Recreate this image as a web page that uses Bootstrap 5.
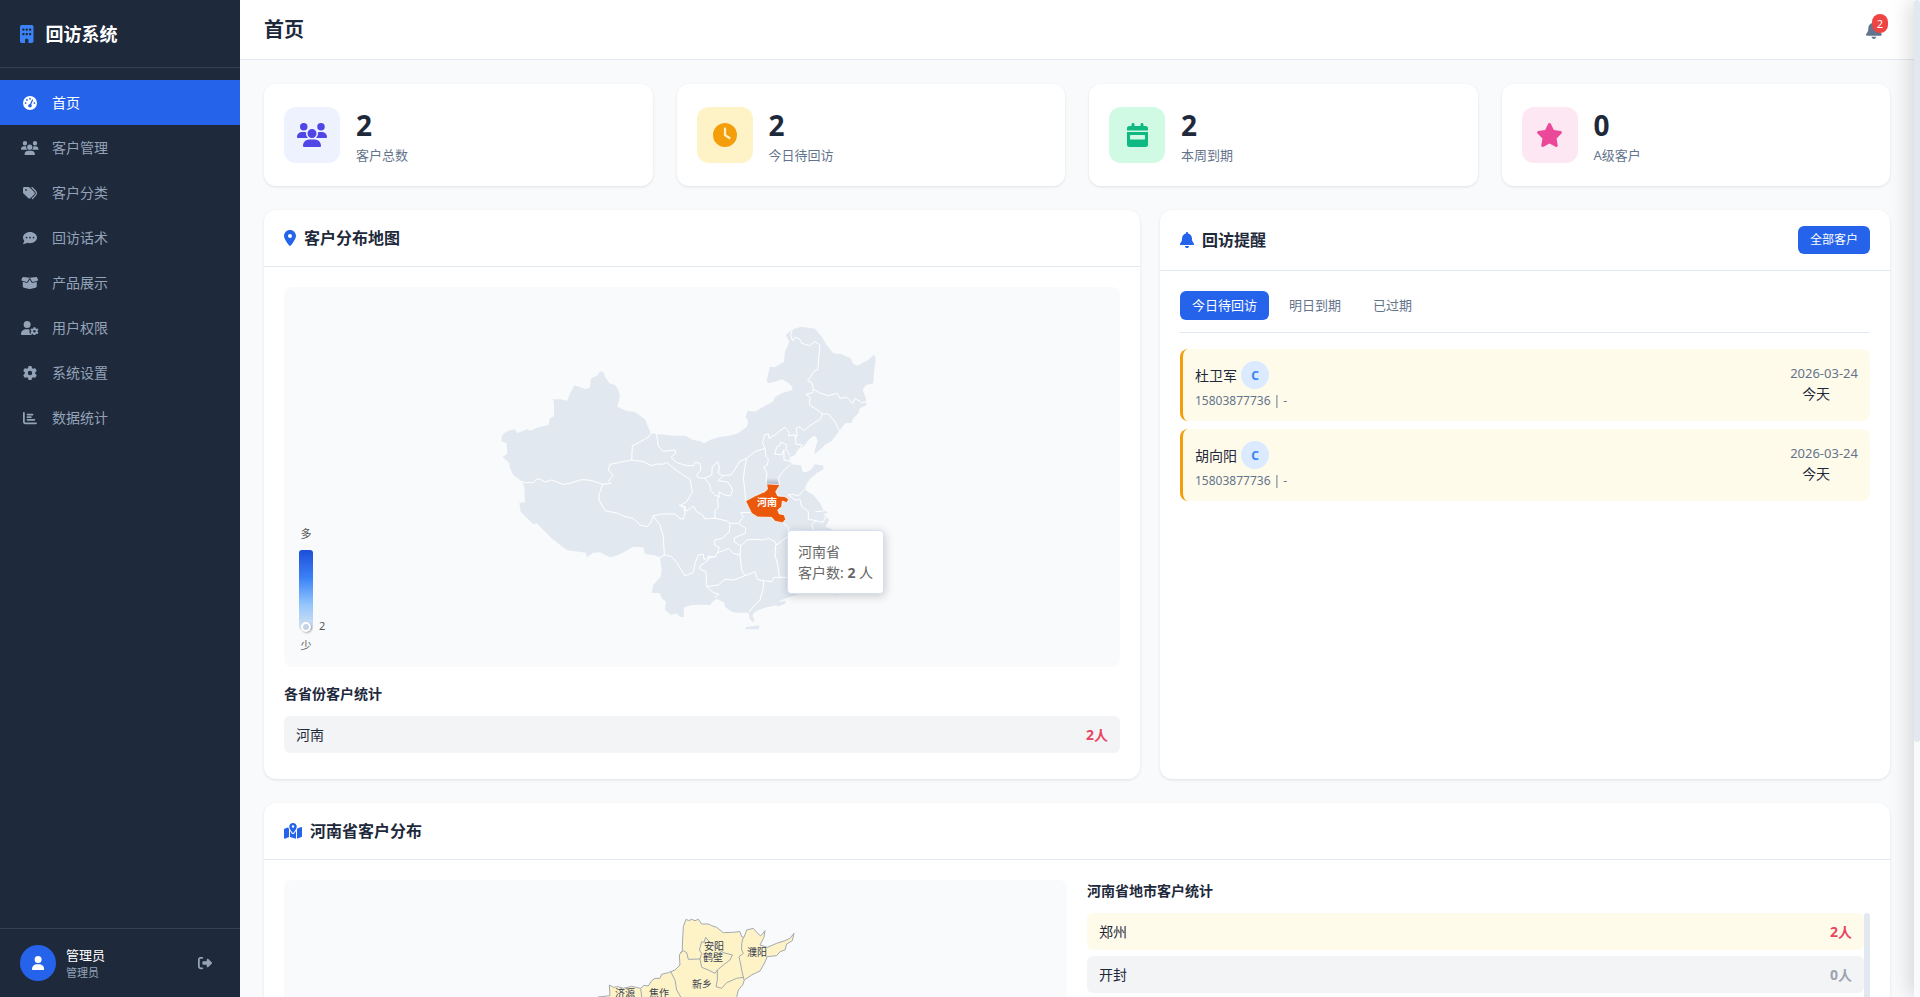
<!DOCTYPE html>
<html lang="zh-CN">
<head>
<meta charset="utf-8">
<meta name="viewport" content="width=device-width, initial-scale=1">
<title>首页 - 回访系统</title>
<link href="https://cdn.jsdelivr.net/npm/bootstrap@5.3.0/dist/css/bootstrap.min.css" rel="stylesheet">
<style>
  :root { --ink:#1e293b; --muted:#64748b; --line:#e2e8f0; --brand:#2563eb; --page:#f8fafc; }
  body { font-family:"Noto Sans","Noto Sans CJK SC",sans-serif; font-size:14px; line-height:21px; color:var(--ink); background:var(--page); }
  .ic { height:1em; width:auto; fill:currentColor; display:block; flex:none; }

  /* sidebar */
  .sidebar { width:240px; background:var(--ink); }
  .brand { height:68px; padding:0 20px; gap:12px; font-size:18px; line-height:24px; border-bottom:1px solid #334155; }
  .brand .ic { color:#3b82f6; }
  .side-nav { padding:12px 0; }
  .side-nav a { color:#94a3b8; padding:12px 20px; gap:12px; text-decoration:none; }
  .side-nav a.active { color:#fff; background:var(--brand); }
  .side-nav .slot { width:20px; }
  .side-user { padding:16px 20px; gap:10px; border-top:1px solid #334155; }
  .avatar { width:36px; height:36px; background:var(--brand); font-size:14px; color:#fff; }
  .u-name { font-size:13px; line-height:20px; color:#fff; }
  .u-role { font-size:11px; line-height:16px; color:#94a3b8; }
  .logout { color:#94a3b8; margin-right:8px; font-size:14px; }

  /* main */
  .main { overflow-y:auto; scrollbar-width:none; }
  .main::-webkit-scrollbar { display:none; }
  .topbar { height:60px; padding:0 24px; border-bottom:1px solid var(--line); background:#fff; }
  .topbar h1 { font-size:20px; line-height:24px; }
  .bell { padding:0 8px; font-size:18px; color:var(--muted); }
  .bell-count { top:-7px; right:2px; width:16px; height:19px; border-radius:10px; background:#ef4444; font-size:11px; line-height:19px; }
  .content { padding:24px; }
  .panel { background:#fff; border-radius:12px; box-shadow:0 1px 3px rgba(0,0,0,.1); }
  .stat { padding:20px; gap:16px; }
  .stat-icon { width:56px; height:56px; border-radius:12px; font-size:24px; }
  .stat-num { font-size:28px; line-height:42px; }
  .stat-label { font-size:13px; line-height:18px; padding-bottom:2px; color:var(--muted); }
  .tone-indigo { background:#eef2ff; color:#4f46e5; }
  .tone-amber { background:#fef3c7; color:#f59e0b; }
  .tone-green { background:#d1fae5; color:#10b981; }
  .tone-pink { background:#fce7f3; color:#ec4899; }

  .split-map { display:grid; grid-template-columns:1.2fr 1fr; gap:20px; }
  .split-city { display:grid; grid-template-columns:1fr 1fr; gap:20px; }
  .panel-head { padding:16px 20px; border-bottom:1px solid var(--line); }
  .panel-head h2 { font-size:16px; line-height:24px; gap:8px; }
  .panel-head .ic { color:var(--brand); }
  .panel-body { padding:20px; }
  .map-box { background:var(--page); border-radius:8px; }
  .map-box > svg { display:block; width:100%; height:380px; }
  .sub-title { font-size:14px; line-height:21px; margin-bottom:12px; }
  .count-row { background:#f3f4f6; border-radius:6px; padding:8px 12px; margin-bottom:6px; }
  .count-row.hot { background:#fffbeb; }
  .count-row b { color:#9ca3af; }
  .count-row .some { color:#e94560; }

  .visual-map { left:12px; bottom:13px; width:20px; font-size:11px; line-height:16px; color:#555; }
  .ramp { width:14px; height:80px; border-radius:3px; background:linear-gradient(#1d4ed8,#3b82f6 35%,#93c5fd 68%,#dbe4ee); }
  .ramp i { left:2px; bottom:-2px; width:10px; height:10px; border:2px solid #fff; border-radius:50%; background:#c4d2e5; box-shadow:1px 1px 2px rgba(0,0,0,.3); }
  .ramp span { left:20px; bottom:-4px; }
  .map-tip { left:calc(50% + 85px); top:243px; padding:10px; background:#fff; border:1px solid #d5e1f2; border-radius:4px; color:#666; box-shadow:1px 2px 10px rgba(0,0,0,.2); }

  .btn-brand { background:var(--brand); color:#fff; border:0; border-radius:6px; font-size:12px; line-height:18px; padding:5px 12px; }
  .tabs { gap:8px; padding-bottom:12px; border-bottom:1px solid var(--line); margin-bottom:16px; }
  .tabs button { border:0; background:none; color:var(--muted); border-radius:6px; font-size:13px; line-height:19px; padding:5px 12px; }
  .tabs button.active { background:var(--brand); color:#fff; }
  .remind { border-left:3px solid #f59e0b; background:#fffbeb; border-radius:8px; padding:12px 12px 8px; margin-bottom:8px; }
  .grade { width:28px; height:28px; background:#dbeafe; color:#3b82f6; font-size:12px; }
  .minor { font-size:12px; line-height:24px; color:var(--muted); }
  .date { font-size:13px; }
  .day { padding-left:12px; line-height:18px; }

  .city-list { max-height:346px; overflow:hidden; }
  .thumb { width:6px; background:var(--line); border-radius:3px; }
  .rail { width:6px; z-index:2; }
  .rail .thumb { height:74.4%; }
  .rail::before { content:""; position:absolute; z-index:-1; inset:0 auto 0 0; width:400px; background:var(--page); box-shadow:-4px 0 20px rgba(0,0,0,.15); }
</style>
</head>
<body>
<svg width="0" height="0" class="position-absolute" aria-hidden="true">
  <defs>
    <path id="i-building" d="M48 0C21.5 0 0 21.5 0 48V464c0 26.5 21.5 48 48 48h96V432c0-26.5 21.5-48 48-48s48 21.5 48 48v80h96c26.5 0 48-21.5 48-48V48c0-26.5-21.5-48-48-48H48zM64 240c0-8.8 7.2-16 16-16h32c8.8 0 16 7.2 16 16v32c0 8.8-7.2 16-16 16H80c-8.8 0-16-7.2-16-16V240zm112-16h32c8.8 0 16 7.2 16 16v32c0 8.8-7.2 16-16 16H176c-8.8 0-16-7.2-16-16V240c0-8.8 7.2-16 16-16zm80 16c0-8.8 7.2-16 16-16h32c8.8 0 16 7.2 16 16v32c0 8.8-7.2 16-16 16H272c-8.8 0-16-7.2-16-16V240zM80 96h32c8.8 0 16 7.2 16 16v32c0 8.8-7.2 16-16 16H80c-8.8 0-16-7.2-16-16V112c0-8.8 7.2-16 16-16zm80 16c0-8.8 7.2-16 16-16h32c8.8 0 16 7.2 16 16v32c0 8.8-7.2 16-16 16H176c-8.8 0-16-7.2-16-16V112zM272 96h32c8.8 0 16 7.2 16 16v32c0 8.8-7.2 16-16 16H272c-8.8 0-16-7.2-16-16V112c0-8.8 7.2-16 16-16z"/>
    <path id="i-gauge" d="M0 256a256 256 0 1 1 512 0A256 256 0 1 1 0 256zM288 96a32 32 0 1 0 -64 0 32 32 0 1 0 64 0zM256 416c35.3 0 64-28.7 64-64c0-17.4-6.9-33.1-18.1-44.6L366 161.7c5.3-12.1-.2-26.3-12.3-31.6s-26.3 .2-31.6 12.3L257.9 288c-.6 0-1.3 0-1.9 0c-35.3 0-64 28.7-64 64s28.7 64 64 64zM176 144a32 32 0 1 0 -64 0 32 32 0 1 0 64 0zM96 288a32 32 0 1 0 0-64 32 32 0 1 0 0 64zm352-32a32 32 0 1 0 -64 0 32 32 0 1 0 64 0z"/>
    <path id="i-users" d="M144 0a80 80 0 1 1 0 160A80 80 0 1 1 144 0zM512 0a80 80 0 1 1 0 160A80 80 0 1 1 512 0zM0 298.7C0 239.8 47.8 192 106.7 192h42.7c15.9 0 31 3.5 44.6 9.7c-1.3 7.2-1.9 14.7-1.9 22.3c0 38.2 16.8 72.5 43.3 96c-.2 0-.4 0-.7 0H21.3C9.6 320 0 310.4 0 298.7zM405.3 320c-.2 0-.4 0-.7 0c26.6-23.5 43.3-57.8 43.3-96c0-7.6-.7-15-1.9-22.3c13.6-6.3 28.7-9.7 44.6-9.7h42.7C592.2 192 640 239.8 640 298.7c0 11.8-9.6 21.3-21.3 21.3H405.3zM224 224a96 96 0 1 1 192 0 96 96 0 1 1 -192 0zM128 485.3C128 411.7 187.7 352 261.3 352H378.7C452.3 352 512 411.7 512 485.3c0 14.7-11.9 26.7-26.7 26.7H154.7c-14.7 0-26.7-11.9-26.7-26.7z"/>
    <path id="i-tags" d="M345 39.1L472.8 168.4c52.4 53 52.4 138.2 0 191.2L360.8 472.9c-9.3 9.4-24.5 9.5-33.9 .2s-9.5-24.5-.2-33.9L438.6 325.9c33.9-34.3 33.9-89.4 0-123.7L310.9 72.9c-9.3-9.4-9.2-24.6 .2-33.9s24.6-9.2 33.9 .2zM0 229.5V80C0 53.5 21.5 32 48 32H197.5c17 0 33.3 6.7 45.3 18.7l168 168c25 25 25 65.5 0 90.5L277.3 442.7c-25 25-65.5 25-90.5 0l-168-168C6.7 262.7 0 246.5 0 229.5zM144 144a32 32 0 1 0 -64 0 32 32 0 1 0 64 0z"/>
    <path id="i-comment" d="M256 448c141.4 0 256-93.1 256-208S397.4 32 256 32S0 125.1 0 240c0 45.1 17.7 86.8 47.7 120.9c-1.9 24.5-11.4 46.3-21.4 62.9c-5.5 9.2-11.1 16.6-15.2 21.6c-2.1 2.5-3.7 4.4-4.9 5.7l-1.6 1.7c-4.6 4.6-5.9 11.4-3.4 17.4c2.5 6 8.3 9.9 14.8 9.9c28.7 0 57.6-8.9 81.6-19.3c22.9-10 42.4-21.9 54.3-30.6c31.8 11.5 67 17.9 104.1 17.9zM128 208a32 32 0 1 1 0 64 32 32 0 1 1 0-64zm128 0a32 32 0 1 1 0 64 32 32 0 1 1 0-64zm96 32a32 32 0 1 1 64 0 32 32 0 1 1 -64 0z"/>
    <path id="i-box" d="M58.9 42.1c3-6.1 9.6-9.6 16.3-8.7L320 64 564.8 33.4c6.7-.8 13.3 2.7 16.3 8.7l41.7 83.4c9 17.9-.6 39.6-19.8 45.1L439.6 217.3c-13.9 4-28.8-1.9-36.2-14.3L320 64 236.6 203c-7.4 12.4-22.3 18.3-36.2 14.3L37.1 170.6c-19.3-5.5-28.8-27.2-19.8-45.1L58.9 42.1zM321.1 128l54.9 91.4c14.9 24.8 44.6 36.6 72.5 28.6L576 211.6v167c0 22-15 41.2-36.4 46.6l-204.1 51c-10.2 2.6-20.9 2.6-31 0l-204.1-51C79 419.7 64 400.5 64 378.5v-167L191.6 248c27.8 8 57.6-3.8 72.5-28.6L318.9 128h2.2z"/>
    <path id="i-gear" d="M495.9 166.6c3.2 8.7 .5 18.4-6.4 24.6l-43.3 39.4c1.1 8.3 1.7 16.8 1.7 25.4s-.6 17.1-1.7 25.4l43.3 39.4c6.9 6.2 9.6 15.9 6.4 24.6c-4.4 11.9-9.7 23.3-15.8 34.3l-4.7 8.1c-6.6 11-14 21.4-22.1 31.2c-5.9 7.2-15.7 9.6-24.5 6.8l-55.7-17.7c-13.4 10.3-28.2 18.9-44 25.4l-12.5 57.1c-2 9.1-9 16.3-18.2 17.8c-13.8 2.3-28 3.5-42.5 3.5s-28.7-1.2-42.5-3.5c-9.2-1.5-16.2-8.7-18.2-17.8l-12.5-57.1c-15.8-6.5-30.6-15.1-44-25.4L83.1 425.9c-8.8 2.8-18.6 .3-24.5-6.8c-8.1-9.8-15.5-20.2-22.1-31.2l-4.7-8.1c-6.1-11-11.4-22.4-15.8-34.3c-3.2-8.7-.5-18.4 6.4-24.6l43.3-39.4C64.6 273.1 64 264.6 64 256s.6-17.1 1.7-25.4L22.4 191.2c-6.9-6.2-9.6-15.9-6.4-24.6c4.4-11.9 9.7-23.3 15.8-34.3l4.7-8.1c6.6-11 14-21.4 22.1-31.2c5.9-7.2 15.7-9.6 24.5-6.8l55.7 17.7c13.4-10.3 28.2-18.9 44-25.4l12.5-57.1c2-9.1 9-16.3 18.2-17.8C227.3 1.2 241.5 0 256 0s28.7 1.2 42.5 3.5c9.2 1.5 16.2 8.7 18.2 17.8l12.5 57.1c15.8 6.5 30.6 15.1 44 25.4l55.7-17.7c8.8-2.8 18.6-.3 24.5 6.8c8.1 9.8 15.5 20.2 22.1 31.2l4.7 8.1c6.1 11 11.4 22.4 15.8 34.3zM256 336a80 80 0 1 0 0-160 80 80 0 1 0 0 160z"/>
    <g id="i-usergear"><path d="M224 0a128 128 0 1 1 0 256A128 128 0 1 1 224 0zM178.3 304h91.4c11.8 0 23.4 1.2 34.5 3.3c-2.1 18.5 7.4 35.6 21.8 44.8c-16.6 10.6-26.7 31.6-20 53.3c4 12.9 9.4 25.5 16.4 37.6s15.2 23.1 24.4 33c15.7 16.9 39.6 18.4 57.2 8.7v.9c0 9.2 2.7 18.5 7.9 26.3H29.7C13.3 512 0 498.7 0 482.3C0 383.8 79.8 304 178.3 304z"/><use href="#i-gear" transform="translate(340 224) scale(.59)"/></g>
    <path id="i-chart" d="M32 32c17.7 0 32 14.3 32 32V400c0 8.8 7.2 16 16 16H480c17.7 0 32 14.3 32 32s-14.3 32-32 32H80c-44.2 0-80-35.8-80-80V64C0 46.3 14.3 32 32 32zm96 96c0-17.7 14.3-32 32-32l192 0c17.7 0 32 14.3 32 32s-14.3 32-32 32l-192 0c-17.7 0-32-14.3-32-32zm32 64H288c17.7 0 32 14.3 32 32s-14.3 32-32 32H160c-17.7 0-32-14.3-32-32s14.3-32 32-32zm0 96H416c17.7 0 32 14.3 32 32s-14.3 32-32 32H160c-17.7 0-32-14.3-32-32s14.3-32 32-32z"/>
    <path id="i-pin" d="M215.7 499.2C267 435 384 279.4 384 192C384 86 298 0 192 0S0 86 0 192c0 87.4 117 243 168.3 307.2c12.3 15.3 35.1 15.3 47.4 0zM192 128a64 64 0 1 1 0 128 64 64 0 1 1 0-128z"/>
    <path id="i-bell" d="M224 0c-17.7 0-32 14.3-32 32V51.2C119 66 64 130.6 64 208v18.8c0 47-17.3 92.4-48.5 127.6l-7.4 8.3c-8.4 9.4-10.4 22.9-5.3 34.4S19.4 416 32 416H416c12.6 0 24-7.4 29.2-18.9s3.1-25-5.3-34.4l-7.4-8.3C401.3 319.2 384 273.9 384 226.8V208c0-77.4-55-142-128-156.8V32c0-17.7-14.3-32-32-32zm45.3 493.3c12-12 18.7-28.3 18.7-45.3H224 160c0 17 6.7 33.3 18.7 45.3s28.3 18.7 45.3 18.7s33.3-6.7 45.3-18.7z"/>
    <path id="i-clock" d="M256 0a256 256 0 1 1 0 512A256 256 0 1 1 256 0zM232 120V256c0 8 4 15.5 10.7 20l96 64c11 7.4 25.9 4.4 33.3-6.7s4.4-25.9-6.7-33.3L280 243.2V120c0-13.3-10.7-24-24-24s-24 10.7-24 24z"/>
    <path id="i-week" d="M128 0c17.7 0 32 14.3 32 32V64H288V32c0-17.7 14.3-32 32-32s32 14.3 32 32V64h48c26.5 0 48 21.5 48 48v48H0V112C0 85.5 21.5 64 48 64H96V32c0-17.7 14.3-32 32-32zM0 192H448V464c0 26.5-21.5 48-48 48H48c-26.5 0-48-21.5-48-48V192zm80 64c-8.8 0-16 7.2-16 16v64c0 8.8 7.2 16 16 16H368c8.8 0 16-7.2 16-16V272c0-8.8-7.2-16-16-16H80z"/>
    <path id="i-star" d="M316.9 18C311.6 7 300.4 0 288.1 0s-23.4 7-28.8 18L195 150.3 51.4 171.5c-12 1.8-22 10.2-25.7 21.7s-.7 24.2 7.9 32.7L137.8 329 113.2 474.7c-2 12 3 24.2 12.9 31.3s23 8 33.8 2.3l128.3-68.5 128.3 68.5c10.8 5.7 23.9 4.9 33.8-2.3s14.9-19.3 12.9-31.3L438.5 329 542.7 225.9c8.6-8.5 11.7-21.2 7.9-32.7s-13.7-19.9-25.7-21.7L381.2 150.3 316.9 18z"/>
    <path id="i-mappin" d="M408 120c0 54.6-73.1 151.9-105.2 192c-7.7 9.6-22 9.6-29.6 0C241.1 271.9 168 174.6 168 120C168 53.7 221.7 0 288 0s120 53.7 120 120zm8 80.4c3.5-6.9 6.7-13.8 9.6-20.6c.5-1.2 1-2.5 1.5-3.7l116-46.4C558.9 123.4 576 135 576 152V422.8c0 9.8-6 18.6-15.1 22.3L416 503V200.4zM137.6 138.3c2.4 14.1 7.2 28.3 12.8 41.5c2.9 6.8 6.1 13.7 9.6 20.6V451.8L32.9 502.7C17.1 509 0 497.4 0 480.4V209.6c0-9.8 6-18.6 15.1-22.3l122.6-49zM327.8 332c13.9-17.4 35.7-45.7 56.2-77V504.3L192 449.4V255c20.5 31.3 42.3 59.6 56.2 77c20.5 25.6 59.1 25.6 79.6 0zM288 152a40 40 0 1 0 0-80 40 40 0 1 0 0 80z"/>
    <path id="i-user" d="M224 256A128 128 0 1 0 224 0a128 128 0 1 0 0 256zm-45.7 48C79.8 304 0 383.8 0 482.3C0 498.7 13.3 512 29.7 512H418.3c16.4 0 29.7-13.3 29.7-29.7C448 383.8 368.2 304 269.7 304H178.3z"/>
    <path id="i-logout" d="M377.9 105.9L500.7 228.7c7.2 7.2 11.3 17.1 11.3 27.3s-4.1 20.1-11.3 27.3L377.9 406.1c-6.4 6.4-15 9.9-24 9.9c-18.7 0-33.9-15.2-33.9-33.9l0-62.1-128 0c-17.7 0-32-14.3-32-32l0-64c0-17.7 14.3-32 32-32l128 0 0-62.1c0-18.7 15.2-33.9 33.9-33.9c9 0 17.6 3.6 24 9.9zM160 96L96 96c-17.7 0-32 14.3-32 32l0 256c0 17.7 14.3 32 32 32l64 0c17.7 0 32 14.3 32 32s-14.3 32-32 32l-64 0c-53 0-96-43-96-96L0 128C0 75 43 32 96 32l64 0c17.7 0 32 14.3 32 32s-14.3 32-32 32z"/>
  </defs>
</svg>

<div class="d-flex vh-100 overflow-hidden">
  <aside class="sidebar d-flex flex-column flex-shrink-0">
    <div class="brand d-flex align-items-center text-white fw-bold">
      <svg class="ic" viewBox="0 0 384 512"><use href="#i-building"/></svg><span>回访系统</span>
    </div>
    <nav class="side-nav flex-grow-1">
      <a href="#" class="active d-flex align-items-center"><span class="slot d-flex justify-content-center"><svg class="ic" viewBox="0 0 512 512"><use href="#i-gauge"/></svg></span>首页</a>
      <a href="#" class="d-flex align-items-center"><span class="slot d-flex justify-content-center"><svg class="ic" viewBox="0 0 640 512"><use href="#i-users"/></svg></span>客户管理</a>
      <a href="#" class="d-flex align-items-center"><span class="slot d-flex justify-content-center"><svg class="ic" viewBox="0 0 512 512"><use href="#i-tags"/></svg></span>客户分类</a>
      <a href="#" class="d-flex align-items-center"><span class="slot d-flex justify-content-center"><svg class="ic" viewBox="0 0 512 512"><use href="#i-comment"/></svg></span>回访话术</a>
      <a href="#" class="d-flex align-items-center"><span class="slot d-flex justify-content-center"><svg class="ic" viewBox="0 0 640 512"><use href="#i-box"/></svg></span>产品展示</a>
      <a href="#" class="d-flex align-items-center"><span class="slot d-flex justify-content-center"><svg class="ic" viewBox="0 0 640 512"><use href="#i-usergear"/></svg></span>用户权限</a>
      <a href="#" class="d-flex align-items-center"><span class="slot d-flex justify-content-center"><svg class="ic" viewBox="0 0 512 512"><use href="#i-gear"/></svg></span>系统设置</a>
      <a href="#" class="d-flex align-items-center"><span class="slot d-flex justify-content-center"><svg class="ic" viewBox="0 0 512 512"><use href="#i-chart"/></svg></span>数据统计</a>
    </nav>
    <div class="side-user d-flex align-items-center">
      <span class="avatar rounded-circle d-flex align-items-center justify-content-center"><svg class="ic" viewBox="0 0 448 512"><use href="#i-user"/></svg></span>
      <div class="flex-grow-1"><div class="u-name">管理员</div><div class="u-role">管理员</div></div>
      <button type="button" class="logout btn p-0 border-0" aria-label="退出登录"><svg class="ic" viewBox="0 0 512 512"><use href="#i-logout"/></svg></button>
    </div>
  </aside>

  <div class="main flex-grow-1">
    <header class="topbar d-flex align-items-center justify-content-between">
      <h1 class="mb-0 fw-bold">首页</h1>
      <button type="button" class="bell btn border-0 position-relative" aria-label="提醒">
        <svg class="ic" viewBox="0 0 448 512"><use href="#i-bell"/></svg>
        <span class="bell-count position-absolute text-white text-center">2</span>
      </button>
    </header>

    <main class="content">
      <div class="row gx-4 mb-4">
        <div class="col-3"><div class="panel stat d-flex align-items-center">
          <span class="stat-icon tone-indigo d-flex align-items-center justify-content-center"><svg class="ic" viewBox="0 0 640 512"><use href="#i-users"/></svg></span>
          <div><div class="stat-num fw-bold">2</div><div class="stat-label">客户总数</div></div></div></div>
        <div class="col-3"><div class="panel stat d-flex align-items-center">
          <span class="stat-icon tone-amber d-flex align-items-center justify-content-center"><svg class="ic" viewBox="0 0 512 512"><use href="#i-clock"/></svg></span>
          <div><div class="stat-num fw-bold">2</div><div class="stat-label">今日待回访</div></div></div></div>
        <div class="col-3"><div class="panel stat d-flex align-items-center">
          <span class="stat-icon tone-green d-flex align-items-center justify-content-center"><svg class="ic" viewBox="0 0 448 512"><use href="#i-week"/></svg></span>
          <div><div class="stat-num fw-bold">2</div><div class="stat-label">本周到期</div></div></div></div>
        <div class="col-3"><div class="panel stat d-flex align-items-center">
          <span class="stat-icon tone-pink d-flex align-items-center justify-content-center"><svg class="ic" viewBox="0 0 576 512"><use href="#i-star"/></svg></span>
          <div><div class="stat-num fw-bold">0</div><div class="stat-label">A级客户</div></div></div></div>
      </div>

      <div class="split-map mb-4">
        <section class="panel">
          <div class="panel-head"><h2 class="d-flex align-items-center mb-0 fw-semibold"><svg class="ic" viewBox="0 0 384 512"><use href="#i-pin"/></svg>客户分布地图</h2></div>
          <div class="panel-body">
            <div class="map-box position-relative mb-3">
              <svg viewBox="0 0 836 380" role="img" aria-label="全国客户分布">
                <defs><linearGradient id="lift" x1="0" y1="0" x2="0" y2="1"><stop offset="0" stop-color="#94a3b8" stop-opacity="0"/><stop offset="1" stop-color="#94a3b8" stop-opacity=".7"/></linearGradient></defs>
                <g transform="translate(196 23) scale(.33333)" stroke-linejoin="round" stroke-linecap="round">
                  <path fill="#e2e8f0" d="M65 380 L72 370 85 362 105 358 112 370 130 362 142 358 150 362 175 352 205 345 210 325 222 318 222 275 218 268 240 268 262 272 268 255 283 226 300 232 315 237 330 233 333 205 350 198 360 185 370 185 375 200 388 220 405 225 415 240 420 258 412 290 440 303 465 306 495 328 512 370 530 372 580 377 615 377 640 390 660 393 672 400 690 390 715 382 755 376 775 370 800 350 805 335 797 320 803 302 825 305 850 290 878 275 885 262 905 250 938 240 935 228 920 215 905 208 885 215 865 220 860 213 865 190 870 170 885 172 912 155 915 125 928 95 917 75 937 58 965 50 1005 56 1025 80 1040 105 1060 130 1085 133 1112 145 1120 162 1132 167 1165 150 1183 133 1187 150 1182 185 1180 220 1158 225 1148 240 1158 265 1160 285 1140 295 1135 310 1120 325 1115 338 1095 340 1078 362 1055 393 1035 405 1005 432 1003 425 1013 392 1008 380 1000 378 985 390 975 405 950 425 943 437 930 440 928 455 940 464 962 465 968 485 978 487 992 480 1005 463 1030 467 1030 478 1010 490 990 507 978 525 975 540 1000 555 1020 580 1030 600 1045 608 1030 612 1048 630 1035 650 1060 660 1075 690 1080 740 1068 780 1040 810 1000 835 955 852 920 864 900 872 895 885 860 892 835 900 820 910 818 920 824 930 818 937 808 925 806 908 770 908 755 905 735 890 733 878 712 867 700 873 690 885 660 884 635 885 612 892 611 922 600 920 590 910 573 915 555 900 558 875 545 865 540 850 515 848 520 825 542 800 545 780 540 742 520 735 495 732 490 712 460 710 415 735 390 742 360 727 340 728 320 742 318 728 260 720 215 685 170 640 160 643 122 605 118 578 135 577 133 530 127 515 100 495 90 475 88 460 68 440 82 432 80 400 65 394Z"/>
                  <path fill="#e2e8f0" d="M796 952 820 948 838 946 836 958 798 958ZM890 890 898 876 918 872 915 882ZM1066 850 1072 850 1071 858Z"/>
                  <path fill="url(#lift)" d="M860 504H896V522H860Z"/>
                  <g fill="none" stroke="#fff" stroke-width="3">
                    <path d="M512 370 505 382 457 408 455 450 425 456 390 463 385 480 400 497 385 512 392 520 368 523 345 515 325 510 305 509 285 515 270 520 248 523 232 516 215 510 195 516 180 507 170 508 160 518 133 518 127 515"/>
                    <path d="M368 523 357 555 357 570 375 602 410 609 435 620 460 625 480 645 502 650 512 638 520 618 545 612 585 612 600 626 610 627 615 612 612 592 598 585"/>
                    <path d="M455 450 490 455 515 467 530 462 548 463 560 457 578 472 605 492 630 508 637 545 620 575 600 587 615 590 618 604 625 600 640 588 650 605 668 615 675 627 697 625 705 625 725 629 740 633 750 640 775 640 790 620 782 608 810 608"/>
                    <path d="M530 372 535 408 550 424 585 420 587 430 573 442 590 458 620 467 640 467 645 457 660 460 663 480 650 495 655 503 675 505 695 495 697 470 713 455 718 470 715 490 728 497 715 512 745 517 758 540 752 558 735 555 717 546 718 560 705 556 692 540 690 525 675 505"/>
                    <path d="M718 560 712 568 715 590 705 603 705 625M728 497 752 495 765 478 778 455 800 445 795 470 790 505 795 545 797 573"/>
                    <path d="M800 445 825 425 855 415 858 440 865 448 862 465 852 470 861 490 858 518M855 415 848 400 853 375 865 372 867 385 885 375 900 362 915 352 928 368 925 378 945 374 948 390 946 402 967 405 955 423"/>
                    <path d="M945 380 952 378 948 355 960 350 970 362 1000 340 1020 328 1027 312 1045 312 1065 335 1078 362M1027 312 1010 298 988 285 990 262 978 253 998 248 1000 238 1022 250 1045 257 1072 250 1080 265 1100 262 1118 280 1125 265 1145 278 1160 275"/>
                    <path d="M1000 238 997 220 983 212 1003 183 1013 180 1020 105 1005 95 988 107 965 100 960 88 945 82 938 93 932 75 937 58"/>
                    <path d="M885 432 890 410 898 408 903 396 920 405 918 415 925 428 928 435M885 432 905 434 912 420 912 450 928 453M912 420 908 430M930 465 908 485 895 505 898 520"/>
                    <path d="M925 555 940 553 955 558 972 540M925 555 945 570 960 568 965 590 985 605 985 628 1008 632 995 645 1000 658M1008 605 1030 603M1005 632 1030 637 1036 620"/>
                    <path d="M908 638 925 652 925 665M775 640 797 655 795 670 765 683 762 695 782 708 795 697 800 690 820 688 850 690 865 685 885 695 890 705 922 680M782 708 780 735"/>
                    <path d="M750 640 748 665 728 685 705 690 703 705 718 712 712 728 730 722 745 715 760 730 780 735 785 780 795 797"/>
                    <path d="M712 728 705 742 685 738 685 750 660 768 660 778 678 785 680 830 715 825 735 808 760 810 795 797 825 785 832 808 850 812 875 815 882 802 922 802M887 705 885 735 892 760 898 800"/>
                    <path d="M520 618 540 645 550 680 553 735 540 742M553 735 575 740 590 757 615 798 640 787 645 760 655 735 670 733 672 748 700 740M680 830 700 848 717 852 705 862M850 812 850 835 840 870 825 885 808 905"/>
                  </g>
                  <path fill="#ea580c" stroke="#fff" stroke-width="2" d="M861 522 882 523 900 524 887 545 893 558 915 560 926 568 920 578 907 573 905 590 893 600 898 612 912 614 917 628 908 638 885 634 875 622 833 621 815 610 797 573 825 558 855 545 862 538Z"/>
                </g>
                <text x="483" y="219" text-anchor="middle" font-size="10" font-weight="600" fill="#fff">河南</text>
              </svg>
              <div class="visual-map position-absolute d-flex flex-column align-items-center">
                <span class="mb-2">多</span>
                <div class="ramp position-relative mb-2"><i class="position-absolute"></i><span class="position-absolute">2</span></div>
                <span>少</span>
              </div>
              <div class="map-tip position-absolute text-nowrap">河南省<br>客户数: <b>2</b> 人</div>
            </div>
            <h3 class="sub-title fw-semibold">各省份客户统计</h3>
            <div class="count-row d-flex justify-content-between"><span>河南</span><b class="some">2人</b></div>
          </div>
        </section>

        <section class="panel">
          <div class="panel-head d-flex align-items-center justify-content-between">
            <h2 class="d-flex align-items-center mb-0 fw-semibold"><svg class="ic" viewBox="0 0 448 512"><use href="#i-bell"/></svg>回访提醒</h2>
            <button type="button" class="btn btn-brand">全部客户</button>
          </div>
          <div class="panel-body">
            <div class="tabs d-flex">
              <button type="button" class="active">今日待回访</button>
              <button type="button">明日到期</button>
              <button type="button">已过期</button>
            </div>
            <div class="remind d-flex justify-content-between align-items-start">
              <div>
                <div class="d-flex align-items-center gap-1">杜卫军<span class="grade rounded-circle d-flex align-items-center justify-content-center fw-bold">C</span></div>
                <div class="minor">15803877736 | -</div>
              </div>
              <div><div class="minor date">2026-03-24</div><div class="day">今天</div></div>
            </div>
            <div class="remind d-flex justify-content-between align-items-start">
              <div>
                <div class="d-flex align-items-center gap-1">胡向阳<span class="grade rounded-circle d-flex align-items-center justify-content-center fw-bold">C</span></div>
                <div class="minor">15803877736 | -</div>
              </div>
              <div><div class="minor date">2026-03-24</div><div class="day">今天</div></div>
            </div>
          </div>
        </section>
      </div>

      <section class="panel">
        <div class="panel-head"><h2 class="d-flex align-items-center mb-0 fw-semibold"><svg class="ic" viewBox="0 0 576 512"><use href="#i-mappin"/></svg>河南省客户分布</h2></div>
        <div class="panel-body split-city">
          <div class="map-box">
            <svg viewBox="0 0 783 380" role="img" aria-label="河南省客户分布">
              <g transform="translate(276 10) scale(.33333)" fill="#fef3c7" stroke="#a3a8b0" stroke-width="3" stroke-linejoin="round">
                <path d="M378 88 386 92 395 88 405 92 415 88 425 102 445 102 455 107 470 112 490 128 515 127 540 125 545 140 552 142 560 120 580 115 590 127 602 138 615 122 612 142 600 165 622 172 650 160 675 152 690 145 702 130 697 152 680 162 675 180 660 185 650 197 622 200 612 222 600 243 575 255 553 270 548 285 535 300 530 321 560 400 620 450 700 520 640 640 700 720 600 860 400 800 260 720 200 560 20 540 10 420 60 350 115 321 150 317 148 285 160 292 175 290 190 295 215 289 242 295 252 286 265 288 275 272 285 265 300 265 305 253 325 248 345 240 360 225 358 195 367 182 367 165 370 110Z"/>
                <g fill="none">
                  <path d="M360 190 370 182 380 188 385 208 420 207 425 190 418 180 425 155 432 157 437 142 450 158 462 168 490 188 517 195 510 210 490 225 472 240 465 250 445 240 425 232 420 207M472 240 472 270 468 290 485 295 500 278 530 265 550 262"/>
                  <path d="M550 142 545 160 545 180 550 190 537 200 542 222 545 240 552 270M332 245 345 270 350 300 362 321 370 360M242 295 245 321 240 350"/>
                </g>
              </g>
              <g font-size="10" fill="#374151" text-anchor="middle">
                <text x="430" y="70">安阳</text><text x="429" y="81">鹤壁</text><text x="473" y="76">濮阳</text>
                <text x="418" y="108">新乡</text><text x="341" y="117">济源</text><text x="375" y="117">焦作</text>
              </g>
            </svg>
          </div>
          <div>
            <h3 class="sub-title fw-semibold">河南省地市客户统计</h3>
            <div class="city-list d-flex">
              <div class="flex-grow-1">
                <div class="count-row hot d-flex justify-content-between"><span>郑州</span><b class="some">2人</b></div>
                <div class="count-row d-flex justify-content-between"><span>开封</span><b>0人</b></div>
                <div class="count-row d-flex justify-content-between"><span>洛阳</span><b>0人</b></div>
                <div class="count-row d-flex justify-content-between"><span>平顶山</span><b>0人</b></div>
                <div class="count-row d-flex justify-content-between"><span>安阳</span><b>0人</b></div>
              </div>
              <div class="thumb"></div>
            </div>
          </div>
        </div>
      </section>
    </main>
  </div>
  <div class="rail position-relative flex-shrink-0"><div class="thumb"></div></div>
</div>
<script src="https://cdn.jsdelivr.net/npm/bootstrap@5.3.0/dist/js/bootstrap.bundle.min.js"></script>
</body>
</html>
